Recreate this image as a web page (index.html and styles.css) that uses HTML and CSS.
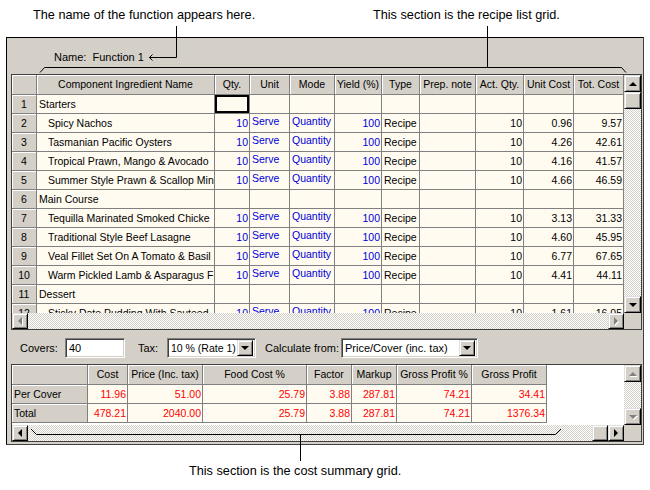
FILE: index.html
```html
<!DOCTYPE html>
<html>
<head>
<meta charset="utf-8">
<title>Function</title>
<link rel="stylesheet" href="styles.css">
</head>
<body>
<div class="page">
  <div class="notes-top">
    <span class="note-name">The name of the function appears here.</span>
    <span class="note-grid">This section is the recipe list grid.</span>
  </div>

  <div class="window">
    <div class="name-row">Name:&nbsp; Function 1</div>

    <div class="grid recipe">
      <div class="cells recipe-cells">
        <div class="h"></div><div class="h">Component Ingredient Name</div><div class="h">Qty.</div><div class="h">Unit</div><div class="h">Mode</div><div class="h">Yield (%)</div><div class="h">Type</div><div class="h">Prep. note</div><div class="h">Act. Qty.</div><div class="h">Unit Cost</div><div class="h">Tot. Cost</div>

        <div class="rh">1</div><div>Starters</div><div class="focus"></div><div></div><div></div><div></div><div></div><div></div><div></div><div></div><div></div>

        <div class="rh">2</div><div class="ind">Spicy Nachos</div><div class="n b">10</div><div class="b up">Serve</div><div class="b up">Quantity</div><div class="n b">100</div><div>Recipe</div><div></div><div class="n">10</div><div class="n">0.96</div><div class="n">9.57</div>

        <div class="rh">3</div><div class="ind">Tasmanian Pacific Oysters</div><div class="n b">10</div><div class="b up">Serve</div><div class="b up">Quantity</div><div class="n b">100</div><div>Recipe</div><div></div><div class="n">10</div><div class="n">4.26</div><div class="n">42.61</div>

        <div class="rh">4</div><div class="ind">Tropical Prawn, Mango &amp; Avocado</div><div class="n b">10</div><div class="b up">Serve</div><div class="b up">Quantity</div><div class="n b">100</div><div>Recipe</div><div></div><div class="n">10</div><div class="n">4.16</div><div class="n">41.57</div>

        <div class="rh">5</div><div class="ind">Summer Style Prawn &amp; Scallop Min</div><div class="n b">10</div><div class="b up">Serve</div><div class="b up">Quantity</div><div class="n b">100</div><div>Recipe</div><div></div><div class="n">10</div><div class="n">4.66</div><div class="n">46.59</div>

        <div class="rh">6</div><div>Main Course</div><div></div><div></div><div></div><div></div><div></div><div></div><div></div><div></div><div></div>

        <div class="rh">7</div><div class="ind">Tequilla Marinated Smoked Chicke</div><div class="n b">10</div><div class="b up">Serve</div><div class="b up">Quantity</div><div class="n b">100</div><div>Recipe</div><div></div><div class="n">10</div><div class="n">3.13</div><div class="n">31.33</div>

        <div class="rh">8</div><div class="ind">Traditional Style Beef Lasagne</div><div class="n b">10</div><div class="b up">Serve</div><div class="b up">Quantity</div><div class="n b">100</div><div>Recipe</div><div></div><div class="n">10</div><div class="n">4.60</div><div class="n">45.95</div>

        <div class="rh">9</div><div class="ind">Veal Fillet Set On A Tomato &amp; Basil</div><div class="n b">10</div><div class="b up">Serve</div><div class="b up">Quantity</div><div class="n b">100</div><div>Recipe</div><div></div><div class="n">10</div><div class="n">6.77</div><div class="n">67.65</div>

        <div class="rh">10</div><div class="ind">Warm Pickled Lamb &amp; Asparagus F</div><div class="n b">10</div><div class="b up">Serve</div><div class="b up">Quantity</div><div class="n b">100</div><div>Recipe</div><div></div><div class="n">10</div><div class="n">4.41</div><div class="n">44.11</div>

        <div class="rh">11</div><div>Dessert</div><div></div><div></div><div></div><div></div><div></div><div></div><div></div><div></div><div></div>

        <div class="rh">12</div><div class="ind">Sticky Date Pudding With Sauteed</div><div class="n b">10</div><div class="b up">Serve</div><div class="b up">Quantity</div><div class="n b">100</div><div>Recipe</div><div></div><div class="n">10</div><div class="n">1.61</div><div class="n">16.05</div>
      </div>

      <div class="vscroll checker">
        <div class="btn"><span class="ar ar-up"></span></div>
        <div class="btn"></div>
        <div class="track"></div>
        <div class="btn"><span class="ar ar-down"></span></div>
      </div>

      <div class="hscroll checker">
        <div class="btn dis"><span class="ar ar-left"></span></div>
        <div class="track"></div>
        <div class="btn dis"><span class="ar ar-right"></span></div>
      </div>
      <div class="corner"></div>
    </div>

    <div class="controls">
      <span class="lbl-covers">Covers:</span>
      <div class="field inp">40</div>
      <span class="lbl-tax">Tax:</span>
      <div class="field sel sel1"><span class="sel-text">10 % (Rate 1)</span><span class="btn drop"><span class="ar ar-down"></span></span></div>
      <span class="lbl-calc">Calculate from:</span>
      <div class="field sel sel2"><span class="sel-text">Price/Cover (inc. tax)</span><span class="btn drop"><span class="ar ar-down"></span></span></div>
    </div>

    <div class="grid summary">
      <div class="cells summary-cells">
        <div class="h"></div><div class="h">Cost</div><div class="h">Price (Inc. tax)</div><div class="h">Food Cost %</div><div class="h">Factor</div><div class="h">Markup</div><div class="h">Gross Profit %</div><div class="h">Gross Profit</div>

        <div class="lab">Per Cover</div><div class="n r">11.96</div><div class="n r">51.00</div><div class="n r">25.79</div><div class="n r">3.88</div><div class="n r">287.81</div><div class="n r">74.21</div><div class="n r">34.41</div>

        <div class="lab">Total</div><div class="n r">478.21</div><div class="n r">2040.00</div><div class="n r">25.79</div><div class="n r">3.88</div><div class="n r">287.81</div><div class="n r">74.21</div><div class="n r">1376.34</div>
      </div>

      <div class="vscroll checker">
        <div class="btn dis"><span class="ar ar-up"></span></div>
        <div class="track"></div>
        <div class="btn dis"><span class="ar ar-down"></span></div>
      </div>

      <div class="hscroll checker">
        <div class="btn"><span class="ar ar-left"></span></div>
        <div class="track"></div>
        <div class="btn"></div>
        <div class="btn"><span class="ar ar-right"></span></div>
      </div>
      <div class="corner"></div>
    </div>
  </div>

  <div class="notes-bottom">This section is the cost summary grid.</div>

  <svg class="leaders" width="650" height="490" viewBox="0 0 650 490" aria-hidden="true">
    <g fill="none" stroke="#000" stroke-width="1">
      <path d="M176.5 26 V57.5 H149"/>
      <path d="M152.5 54.5 L149.5 57.5 L152.5 60.5"/>
      <path d="M487.5 26 V67.5"/>
      <path d="M40 72.5 L44.5 67.5 H621.5 L626 72.5"/>
      <path d="M31 429 L36.5 434.5 H555.5 L561 429"/>
      <path d="M300.5 434.5 V461"/>
    </g>
  </svg>
</div>
</body>
</html>
```

FILE: styles.css
```css
* { box-sizing: border-box; }

html, body {
  margin: 0;
  padding: 0;
  background: #fff;
}

body {
  font-family: "Liberation Sans", Arial, sans-serif;
  font-size: 11px;
  color: #000;
}

.page {
  position: relative;
  width: 650px;
  height: 490px;
  overflow: hidden;
}

/* annotations */
.notes-top {
  height: 37px;
  display: grid;
  grid-template-columns: 373px 1fr;
  padding-top: 7px;
  font-size: 12.7px;
  line-height: 16px;
}
.note-name { padding-left: 33px; }

.notes-bottom {
  padding: 18px 0 0 189px;
  font-size: 12.7px;
  line-height: 16px;
}

.leaders {
  position: absolute;
  left: 0;
  top: 0;
  pointer-events: none;
}

/* window */
.window {
  margin-left: 6px;
  width: 638px;
  height: 408px;
  background: #d4d0c8;
  border: 1px solid #000;
  border-right-color: #404040;
  border-bottom-color: #404040;
  padding: 12px 1px 0 4px;
}

.name-row {
  height: 14px;
  line-height: 14px;
  padding-left: 43px;
  margin-bottom: 10px;
}

/* grids */
.grid {
  width: 631px;
  border: 1px solid #404040;
  display: grid;
  grid-template-columns: 612px 17px;
  background: #d4d0c8;
}
.recipe { grid-template-rows: 238px 16px; }
.summary { grid-template-rows: 60px 16px; margin-top: 6px; }

.cells {
  overflow: hidden;
  display: grid;
  align-content: start;
  grid-auto-rows: 19px;
  grid-template-rows: 20px;
  font-size: 10.5px;
}
.recipe-cells {
  background: #fffbf0;
  grid-template-columns: 25px 178px 35px 40px 45px 47px 38px 56px 48px 50px 50px;
}
.summary-cells {
  background: #fff;
  grid-template-columns: 76px 40px 75px 104px 45px 45px 75px 75px;
}

.cells > div {
  border-right: 1px solid #808080;
  border-bottom: 1px solid #808080;
  white-space: nowrap;
  overflow: hidden;
  line-height: 18px;
  padding: 0 1px 0 2px;
  background: #fffbf0;
}

.cells > .h {
  background: #d4d0c8;
  text-align: center;
  line-height: 19px;
  padding: 0;
  box-shadow: inset 1px 1px #fff;
}
.cells > .rh {
  background: #d4d0c8;
  text-align: center;
  padding: 0;
  box-shadow: inset 1px 1px #fff;
}
.cells > .lab {
  background: #d4d0c8;
  box-shadow: inset 1px 1px #fff;
  padding-left: 2px;
}

.cells > .n { text-align: right; padding: 0 1px 0 0; }
.cells > .ind { padding-left: 11px; }
.cells > .up { line-height: 15px; }
.b { color: #0000d8; }
.r { color: #ff0000; }
.cells > .focus { box-shadow: inset 0 0 0 2px #000; }

/* scrollbars */
.checker {
  background-color: #fff;
  background-image: conic-gradient(#d4d0c8 25%, #fff 0 50%, #d4d0c8 0 75%, #fff 0);
  background-size: 2px 2px;
}

.vscroll {
  display: flex;
  flex-direction: column;
}
.hscroll {
  display: flex;
}
.track { flex: 1; }

.btn {
  flex: none;
  display: flex;
  align-items: center;
  justify-content: center;
  background: #d4d0c8;
  border: 1px solid;
  border-color: #dfdfdf #000 #000 #dfdfdf;
  box-shadow: inset 1px 1px #fff, inset -1px -1px #808080;
}
.vscroll .btn { width: 17px; height: 17px; }
.hscroll .btn { width: 16px; height: 16px; }

.corner { background: #d4d0c8; }

.ar {
  width: 0;
  height: 0;
  border: 4px solid transparent;
  color: #000;
}
.ar-up { border-top-width: 0; border-bottom-color: currentColor; }
.ar-down { border-bottom-width: 0; border-top-color: currentColor; }
.ar-left { border-left-width: 0; border-right-color: currentColor; }
.ar-right { border-right-width: 0; border-left-color: currentColor; }

.dis .ar {
  color: #808080;
  filter: drop-shadow(1px 1px 0 #fff);
}

/* controls */
.controls {
  display: flex;
  align-items: center;
  height: 20px;
  margin-top: 8px;
  padding-left: 9px;
}
.lbl-covers { width: 45px; flex: none; }
.lbl-tax { width: 29px; margin-left: 13px; flex: none; }
.lbl-calc { width: 76px; margin-left: 9px; flex: none; }

.field {
  flex: none;
  height: 20px;
  background: #fff;
  border: 1px solid;
  border-color: #808080 #fff #fff #808080;
  box-shadow: inset 1px 1px #404040, inset -1px -1px #d4d0c8;
  line-height: 18px;
  padding-left: 3px;
}
.inp { width: 60px; }

.sel {
  display: flex;
  align-items: center;
  justify-content: space-between;
  padding: 2px 2px 2px 3px;
  line-height: 16px;
}
.sel-text {
  min-width: 0;
  white-space: nowrap;
  overflow: hidden;
}
.sel1 { width: 89px; }
.sel1 .sel-text { font-size: 10.5px; }
.sel2 { width: 137px; }
.drop { width: 16px; height: 16px; }
```
